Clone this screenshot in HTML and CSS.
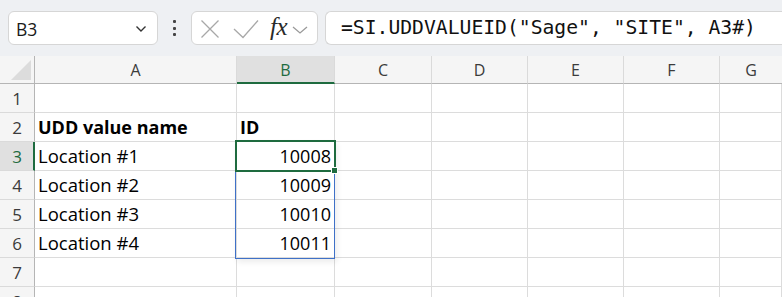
FILE: index.html
```html
<!DOCTYPE html>
<html>
<head>
<meta charset="utf-8">
<link rel="stylesheet" href="styles.css">
</head>
<body>
<div class="app">
  <div class="toolbar">
    <div class="namebox">
      <span class="nb-text">B3</span>
      <svg class="chev" width="12" height="8" viewBox="0 0 12 8"><polyline points="1.5,1.5 6,6 10.5,1.5" fill="none" stroke="#333" stroke-width="1.4"/></svg>
    </div>
    <div class="vdots"><span></span><span></span><span></span></div>
    <div class="fxbox">
      <svg class="ic-x" width="20" height="20" viewBox="0 0 20 20"><path d="M1.5 1.5 L18.5 18.5 M18.5 1.5 L1.5 18.5" stroke="#a8a8a8" stroke-width="1.3" fill="none"/></svg>
      <svg class="ic-check" width="26" height="20" viewBox="0 0 26 20"><polyline points="1,10 10,18.5 25,1.5" fill="none" stroke="#a8a8a8" stroke-width="1.3"/></svg>
      <span class="fx">fx</span>
      <svg class="chev2" width="16" height="8" viewBox="0 0 16 8"><polyline points="1,1 8,7 15,1" fill="none" stroke="#9a9a9a" stroke-width="1.3"/></svg>
    </div>
    <div class="formula">=SI.UDDVALUEID("Sage", "SITE", A3#)</div>
  </div>
  <div class="sheet">
    <div class="hdr corner"><span class="tri"></span></div>
    <div class="hdr col">A</div>
    <div class="hdr col sel">B</div>
    <div class="hdr col">C</div>
    <div class="hdr col">D</div>
    <div class="hdr col">E</div>
    <div class="hdr col">F</div>
    <div class="hdr col last">G</div>

    <div class="rh">1</div><div class="c"></div><div class="c"></div><div class="c"></div><div class="c"></div><div class="c"></div><div class="c"></div><div class="c"></div>
    <div class="rh">2</div><div class="c b">UDD value name</div><div class="c b">ID</div><div class="c"></div><div class="c"></div><div class="c"></div><div class="c"></div><div class="c"></div>
    <div class="rh sel">3</div><div class="c">Location #1</div><div class="c n">10008</div><div class="c"></div><div class="c"></div><div class="c"></div><div class="c"></div><div class="c"></div>
    <div class="rh">4</div><div class="c">Location #2</div><div class="c n">10009</div><div class="c"></div><div class="c"></div><div class="c"></div><div class="c"></div><div class="c"></div>
    <div class="rh">5</div><div class="c">Location #3</div><div class="c n">10010</div><div class="c"></div><div class="c"></div><div class="c"></div><div class="c"></div><div class="c"></div>
    <div class="rh">6</div><div class="c">Location #4</div><div class="c n">10011</div><div class="c"></div><div class="c"></div><div class="c"></div><div class="c"></div><div class="c"></div>
    <div class="rh">7</div><div class="c"></div><div class="c"></div><div class="c"></div><div class="c"></div><div class="c"></div><div class="c"></div><div class="c"></div>
    <div class="rh">8</div><div class="c"></div><div class="c"></div><div class="c"></div><div class="c"></div><div class="c"></div><div class="c"></div><div class="c"></div>

    <div class="range"></div>
    <div class="active"></div>
    <div class="handle"></div>
  </div>
</div>
</body>
</html>
```

FILE: styles.css
```css
* { box-sizing: border-box; }
html, body { margin: 0; padding: 0; background: #fff; }
body { width: 782px; height: 297px; overflow: hidden; }
.app { width: 782px; }

.toolbar {
  height: 56px;
  background: #eef0f3;
  display: flex;
  align-items: flex-start;
  padding-top: 11px;
  padding-left: 8px;
}
.namebox {
  width: 150px;
  height: 34px;
  background: #fff;
  border: 1px solid #d6d6d6;
  border-radius: 6px;
  display: flex;
  align-items: center;
  padding-left: 7px;
  padding-right: 10px;
  justify-content: space-between;
}
.nb-text {
  font-family: "Open Sans", sans-serif;
  font-size: 17.5px;
  color: #1a1a1a;
  margin-top: 1px;
}
.chev { margin-top: 2px; }
.vdots {
  width: 33px;
  height: 34px;
  display: flex;
  flex-direction: column;
  align-items: center;
  justify-content: center;
  gap: 3.5px;
}
.vdots span {
  width: 3px; height: 3px; background: #444; border-radius: 1px; display: block;
}
.fxbox {
  width: 127px;
  height: 34px;
  background: #fff;
  border: 1px solid #d6d6d6;
  border-radius: 6px;
  display: flex;
  align-items: center;
  padding-left: 8px;
}
.ic-x { margin-top: 2px; }
.ic-check { margin-left: 13px; margin-top: 1px; }
.fx {
  font-family: "Liberation Serif", serif;
  font-style: italic;
  font-size: 25px;
  color: #2a2a2a;
  margin-left: 11px;
  margin-top: -3px;
  letter-spacing: -0.5px;
}
.chev2 { margin-left: 5px; margin-top: 3px; }
.formula {
  flex: 1;
  margin-left: 7px;
  height: 34px;
  background: #fff;
  border: 1px solid #d6d6d6;
  border-right: none;
  border-radius: 6px 0 0 6px;
  font-family: "DejaVu Sans Mono", monospace;
  font-size: 19.7px;
  color: #111;
  padding-left: 15px;
  line-height: 32px;
  white-space: nowrap;
}

.sheet {
  position: relative;
  display: grid;
  grid-template-columns: 35px 202px 98px 97px 96px 96px 96px 62px;
  grid-template-rows: 28px repeat(8, 29px);
  font-family: "Open Sans", sans-serif;
}
.hdr {
  background: #f5f5f5;
  border-bottom: 1px solid #b5b5b5;
  border-right: 1px solid #dadada;
  font-size: 16px;
  color: #3b3b3b;
  display: flex;
  align-items: center;
  justify-content: center;
  padding-top: 1px;
}
.hdr.corner { border-right: 1px solid #b5b5b5; position: relative; }
.tri {
  position: absolute;
  right: 3px; bottom: 3px;
  width: 0; height: 0;
  border-style: solid;
  border-width: 0 0 20px 20px;
  border-color: transparent transparent #dcdcdc transparent;
}
.hdr.last { border-right: none; }
.hdr.sel {
  background: #e0e0e0;
  color: #1e6b3f;
  border-bottom: 2px solid #1e6b3f;
  padding-top: 2px;
}
.rh {
  background: #f5f5f5;
  border-right: 1px solid #b5b5b5;
  border-bottom: 1px solid #dadada;
  font-size: 17px;
  color: #3b3b3b;
  display: flex;
  align-items: center;
  justify-content: center;
}
.rh.sel {
  background: #e0e0e0;
  color: #1e6b3f;
  border-right: 2px solid #1e6b3f;
  padding-left: 1px;
}
.c {
  border-right: 1px solid #dcdcdc;
  border-bottom: 1px solid #dcdcdc;
  font-size: 18.5px;
  color: #000;
  padding: 0 3px;
  line-height: 28px;
  white-space: nowrap;
  overflow: visible;
}
.c.b { font-weight: 700; font-size: 18px; }
.c.n { text-align: right; font-size: 18px; }

.range {
  position: absolute;
  left: 235px;
  top: 85px;
  width: 100px;
  height: 118px;
  border: 1px solid #3f71c8;
  box-shadow: 2px 3px 6px rgba(0,0,0,0.08);
  pointer-events: none;
}
.active {
  position: absolute;
  left: 235px;
  top: 84px;
  width: 101px;
  height: 32px;
  border: 2px solid #1e6b3f;
}
.handle {
  position: absolute;
  left: 331px;
  top: 111px;
  width: 7px;
  height: 7px;
  background: #1e6b3f;
  border: 1px solid #fff;
}
```
